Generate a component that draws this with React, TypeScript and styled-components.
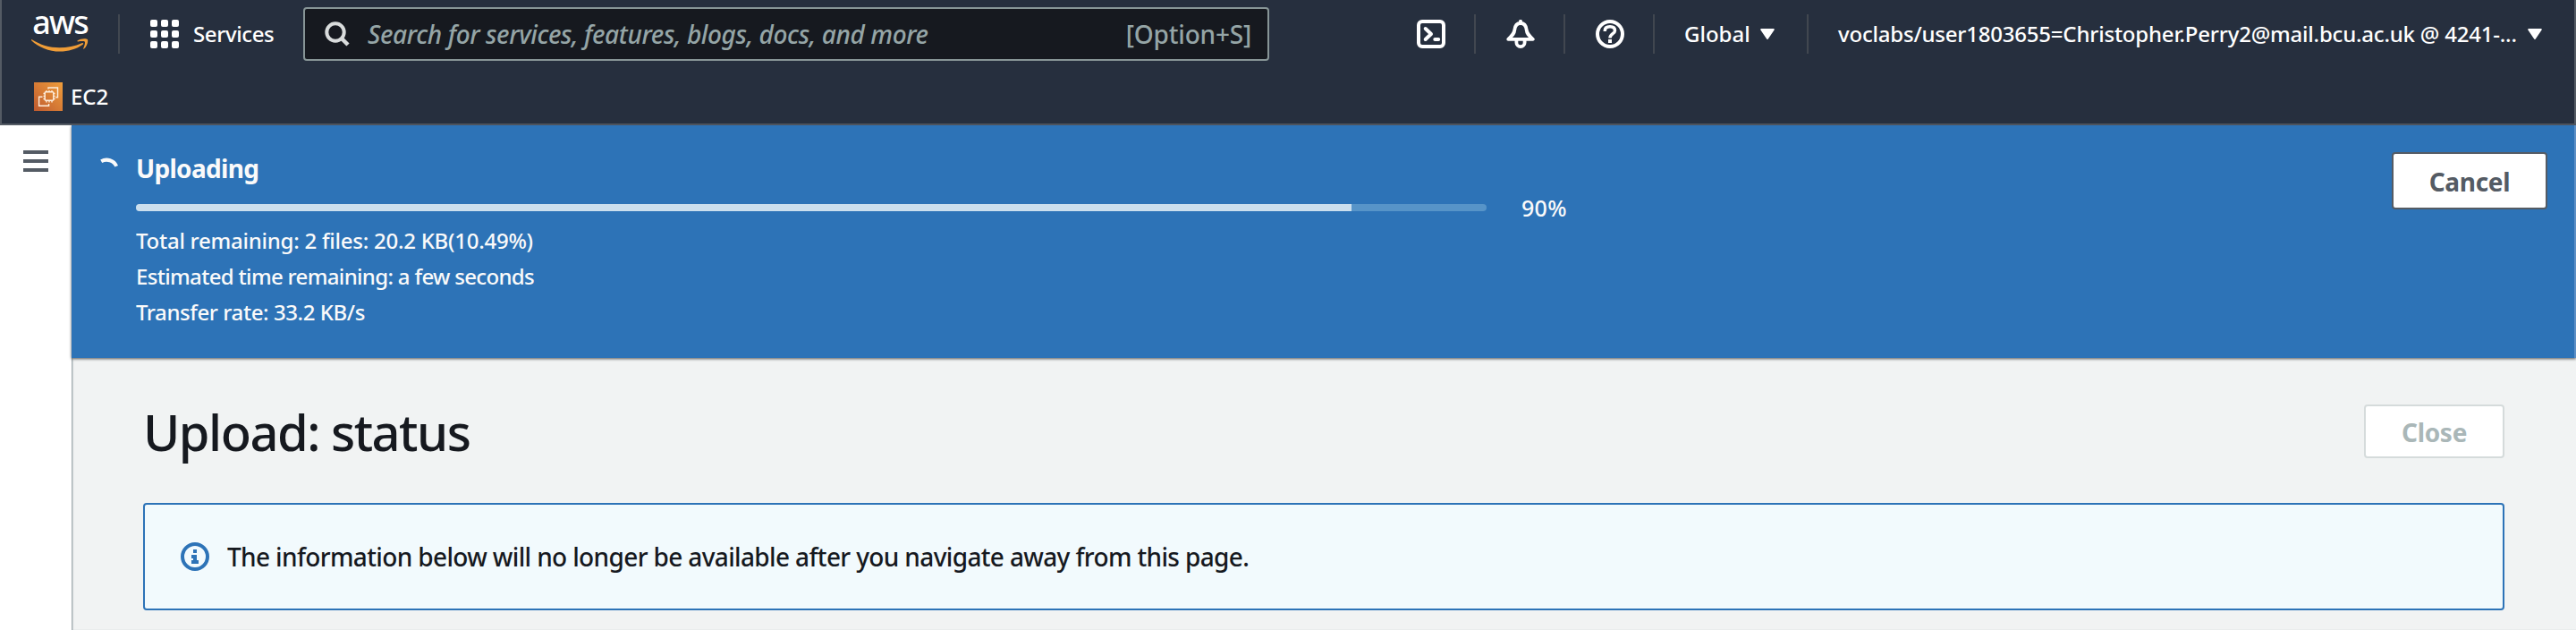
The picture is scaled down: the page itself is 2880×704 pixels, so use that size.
import React from 'react';
import styled, { createGlobalStyle } from 'styled-components';

const color = {
  nav: '#262f3e',
  navEdge: '#545b64',
  separator: '#414750',
  blue: '#2d73b7',
  ink: '#16191f',
  muted: '#95a5a6',
  slate: '#545b64',
};

const GlobalStyle = createGlobalStyle`
  * { box-sizing: border-box; }
  body {
    margin: 0;
    background: #f1f3f3;
    color: ${color.ink};
    font-family: "Noto Sans", "Open Sans", sans-serif;
  }
  svg { display: block; flex: none; }
`;

const Page = styled.div`
  display: flex;
  flex-direction: column;
  width: 2880px;
  height: 704px;
  overflow: hidden;
`;

const Header = styled.header`
  flex: none;
  height: 140px;
  background: ${color.nav};
  border: 2px solid ${color.navEdge};
  border-top: 0;
  color: #fff;
  font-weight: 500;
  font-size: 24px;
`;

const NavRow = styled.div`
  display: flex;
  align-items: center;
  height: 76px;
`;

const Logo = styled.div`
  display: flex;
  flex-direction: column;
  align-items: center;
  width: 64px;
  height: 50px;
  margin: 0 33px;
`;

const LogoText = styled.span`
  height: 30px;
  font-size: 36px;
  line-height: 23px;
  letter-spacing: -1.8px;
`;

const Separator = styled.span`
  flex: none;
  width: 2px;
  height: 44px;
  background: ${color.separator};
`;

const Label = styled.span<{ $spacing?: number }>`
  line-height: 36px;
  white-space: nowrap;
  letter-spacing: ${(p) => p.$spacing ?? 0}px;
`;

const ServicesButton = styled.div`
  display: flex;
  align-items: center;
  gap: 16px;
  width: 205px;
  padding-left: 34px;
`;

const SearchBox = styled.div`
  display: flex;
  align-items: center;
  width: 1080px;
  height: 60px;
  padding: 0 18px 0 22px;
  background: ${color.ink};
  border: 2px solid #879596;
  border-radius: 4px;
  color: ${color.muted};
  font-size: 28px;
`;

const Placeholder = styled(Label)`
  flex: 1;
  margin-left: 20px;
  font-style: italic;
`;

const Tools = styled.div`
  display: flex;
  align-items: center;
  margin-left: auto;
`;

const IconButton = styled.div`
  width: 98px;
  padding-left: 34px;
`;

const Menu = styled.div<{ $width: number }>`
  display: flex;
  align-items: center;
  justify-content: space-between;
  width: ${(p) => p.$width}px;
  padding: 0 36px 0 33px;
`;

const Favorites = styled.div`
  display: flex;
  align-items: center;
  gap: 9px;
  height: 62px;
  padding: 2px 0 0 36px;
`;

const Body = styled.div`
  display: flex;
  flex: 1;
`;

const Sidebar = styled.aside`
  width: 80px;
  padding: 28px 26px;
  background: #fff;
`;

const Hamburger = styled.div`
  display: flex;
  flex-direction: column;
  gap: 6px;
`;

const Bar = styled.span`
  height: 4px;
  background: ${color.slate};
`;

const Main = styled.main`
  flex: 1;
  background: #f1f3f3;
  box-shadow: inset 2px 0 2px -1px rgba(60, 80, 90, 0.6);
`;

const Flash = styled.section`
  display: flex;
  height: 260px;
  padding: 30px 30px 0 24px;
  background: ${color.blue};
  border-right: 2px solid #5c8fc5;
  box-shadow: 0 1px 3px rgba(0, 0, 0, 0.65);
  color: #fafafa;
  font-weight: 500;
  font-size: 24px;
`;

const FlashContent = styled.div`
  flex: 1;
  display: flex;
  flex-direction: column;
  margin-left: 16px;
`;

const FlashTitle = styled(Label)`
  font-size: 28px;
  font-weight: 700;
`;

const ProgressRow = styled.div`
  display: flex;
  align-items: center;
  gap: 39px;
  height: 34px;
  margin-top: 9px;
  font-size: 25px;
`;

const Track = styled.div`
  width: 1510px;
  height: 8px;
  border-radius: 4px;
  overflow: hidden;
  background: #5794c8;
`;

const Fill = styled.div<{ $percent: number }>`
  width: ${(p) => p.$percent}%;
  height: 100%;
  background: #cbdfee;
`;

const Detail = styled(Label)`
  line-height: 40px;
`;

const Button = styled.button<{ $width: number; $height: number; $disabled?: boolean }>`
  flex: none;
  width: ${(p) => p.$width}px;
  height: ${(p) => p.$height}px;
  padding: 2px 0 0;
  background: #fff;
  border: 2px solid ${(p) => (p.$disabled ? '#d5dbdb' : color.slate)};
  border-radius: 4px;
  color: ${(p) => (p.$disabled ? '#aab7b8' : color.slate)};
  font: 700 28px/36px "Noto Sans", sans-serif;
  letter-spacing: -0.3px;
`;

const PageHead = styled.div`
  display: flex;
  align-items: center;
  justify-content: space-between;
  margin: 52px 80px 50px;
  height: 60px;
`;

const Title = styled.h1`
  margin: 0;
  font-weight: 500;
  font-size: 56px;
  line-height: 60px;
  letter-spacing: -1.5px;
`;

const Alert = styled.div`
  display: flex;
  align-items: center;
  gap: 20px;
  height: 120px;
  margin: 0 80px;
  padding-left: 40px;
  background: #f2fafd;
  border: 2px solid ${color.blue};
  border-radius: 4px;
  font-size: 28px;
  font-weight: 500;
`;

const Smile = () => (
  <svg width="64" height="15" viewBox="0 0 64 15" fill="#f09d37">
    <path d="M.7 1.2C10 7 20 10.2 31.500 10.200C40 10.200 49 8.500 56.500 5.200C58 4.600 58.800 5.900 57.600 6.800C50.500 12 41 14.600 32 14.600C19.500 14.600 8.500 10 .4 2.500C-.2 1.700 0 .8.7 1.200Z" />
    <path d="M51.500 2.400C55 0 61.500-.3 62.800 1.100C64 2.600 62.300 9 59 11.500C58.400 11.900 57.900 11.600 58.200 11C59 9 60.600 4.800 59.800 3.700C59 2.700 54.500 3.200 52.200 3.400C51.500 3.500 51 2.800 51.500 2.400Z" />
  </svg>
);

const GridIcon = () => (
  <svg width="32" height="32" fill="#fff">
    {[0, 12, 24].map((y) =>
      [0, 12, 24].map((x) => <rect key={`${x}-${y}`} x={x} y={y} width="8" height="8" rx="2" />),
    )}
  </svg>
);

const SearchIcon = () => (
  <svg width="28" height="28" fill="none" stroke="#d9dcdc" strokeWidth="4">
    <circle cx="12" cy="12" r="9.7" />
    <path d="M18.500 18.500 26 26" strokeWidth="4.500" />
  </svg>
);

const TerminalIcon = () => (
  <svg width="32" height="32" fill="none" stroke="#fff" strokeWidth="4">
    <rect x="2" y="2" width="28" height="28" rx="4" />
    <path d="M9.700 10 16 16 9.700 22M20.300 22H24.200" strokeLinecap="round" strokeLinejoin="round" />
  </svg>
);

const BellIcon = () => (
  <svg width="32" height="32" fill="none" stroke="#fff" strokeWidth="3.800" strokeLinejoin="round">
    <path d="M16 1.800V4" strokeWidth="4" strokeLinecap="round" />
    <path d="M2.200 21.800C7 17.500 9 15.500 9.300 11.500C9.800 6.500 12 4 16 4S22.200 6.500 22.700 11.500C23 15.500 25 17.500 29.800 21.800Z" />
    <path d="M11.400 23V25.500A4.600 4.600 0 0 0 20.600 25.500V23" />
  </svg>
);

const HelpIcon = () => (
  <svg width="32" height="32" fill="none" stroke="#fff">
    <circle cx="16" cy="16" r="14" strokeWidth="4" />
    <path d="M10.300 13V12.200C10.300 9.300 12.600 7.800 16 7.800S21.500 9.300 21.500 12.200C21.500 15.800 16 15.800 16 20.600" strokeWidth="3.500" />
    <path d="M14 24H18" strokeWidth="4" />
  </svg>
);

const Caret = () => (
  <svg width="16" height="12" fill="#fff" stroke="#fff" strokeWidth="2" strokeLinejoin="round">
    <path d="M1.200 1H14.800L8 11Z" />
  </svg>
);

const Ec2Icon = () => (
  <svg width="32" height="32" fill="none" stroke="#fdeedd" strokeWidth="1.400">
    <defs>
      <linearGradient id="ec2" x1="0" y1="1" x2="1" y2="0">
        <stop offset="0" stopColor="#be5a2f" />
        <stop offset="1" stopColor="#f09e3b" />
      </linearGradient>
    </defs>
    <rect width="32" height="32" fill="url(#ec2)" stroke="none" />
    <path d="M16 7.500V6H26.500V16.700H24.300M9.500 16.300H5.600V26.300H16.600V24" />
    <rect x="12.200" y="10.700" width="9.600" height="9.600" rx="1" />
    <path d="M14 9V10.700M17 9V10.700M20 9V10.700M14 20.300V22.500M17 20.300V22.500M20 20.300V22.500M10.500 12.500H12.200M10.500 15.500H12.200M10.500 18.500H12.200M21.800 12.500H23.500M21.800 15.500H23.500M21.800 18.500H23.500" />
  </svg>
);

const Spinner = () => (
  <svg width="32" height="32" viewBox="0 0 32 32" fill="none" stroke="#fafafa" strokeWidth="4">
    <path d="M9.200 10.300A12 12 0 0 1 26.200 15.800" />
  </svg>
);

const InfoIcon = () => (
  <svg width="32" height="32" fill={color.blue}>
    <circle cx="16" cy="16" r="14" fill="none" stroke={color.blue} strokeWidth="4" />
    <path d="M14 8H18V12H14ZM12 14H18V20H20V24H12V20H14V18H12Z" />
  </svg>
);

export default function App() {
  return (
    <Page>
      <GlobalStyle />
      <Header>
        <NavRow>
          <Logo>
            <LogoText>aws</LogoText>
            <Smile />
          </Logo>
          <Separator />
          <ServicesButton>
            <GridIcon />
            <Label $spacing={-0.4}>Services</Label>
          </ServicesButton>
          <SearchBox>
            <SearchIcon />
            <Placeholder $spacing={-0.38}>Search for services, features, blogs, docs, and more</Placeholder>
            <Label $spacing={-0.2}>[Option+S]</Label>
          </SearchBox>
          <Tools>
            <IconButton><TerminalIcon /></IconButton>
            <Separator />
            <IconButton><BellIcon /></IconButton>
            <Separator />
            <IconButton><HelpIcon /></IconButton>
            <Separator />
            <Menu $width={170}>
              <Label>Global</Label>
              <Caret />
            </Menu>
            <Separator />
            <Menu $width={856}>
              <Label $spacing={-0.21}>voclabs/user1803655=Christopher.Perry2@mail.bcu.ac.uk @ 4241-...</Label>
              <Caret />
            </Menu>
          </Tools>
        </NavRow>
        <Favorites>
          <Ec2Icon />
          <Label>EC2</Label>
        </Favorites>
      </Header>
      <Body>
        <Sidebar>
          <Hamburger>
            <Bar />
            <Bar />
            <Bar />
          </Hamburger>
        </Sidebar>
        <Main>
          <Flash>
            <Spinner />
            <FlashContent>
              <FlashTitle $spacing={-0.7}>Uploading</FlashTitle>
              <ProgressRow>
                <Track>
                  <Fill $percent={90} />
                </Track>
                <Label $spacing={0.3}>90%</Label>
              </ProgressRow>
              <Detail $spacing={-0.25}>Total remaining: 2 files: 20.2 KB(10.49%)</Detail>
              <Detail $spacing={-0.67}>Estimated time remaining: a few seconds</Detail>
              <Detail $spacing={-0.42}>Transfer rate: 33.2 KB/s</Detail>
            </FlashContent>
            <Button $width={174} $height={64}>Cancel</Button>
          </Flash>
          <PageHead>
            <Title>Upload: status</Title>
            <Button $width={157} $height={60} $disabled>Close</Button>
          </PageHead>
          <Alert>
            <InfoIcon />
            <Label $spacing={-0.64}>The information below will no longer be available after you navigate away from this page.</Label>
          </Alert>
        </Main>
      </Body>
    </Page>
  );
}
